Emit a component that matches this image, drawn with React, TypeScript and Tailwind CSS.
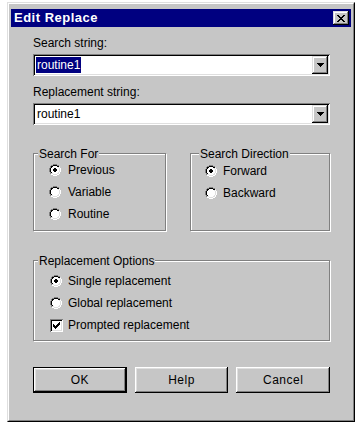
import type { ReactNode } from 'react';

const FACE = 'bg-[#c6c6c6]';

const COLORS: Record<string, string> = {
  D: '#808080',
  K: '#000000',
  W: '#ffffff',
  L: '#dfdfdf',
  w: '#ffffff',
  '#': '#000000',
};

// tiny bitmap glyphs, one rect per pixel
function Pixels({ rows, className }: { rows: string[]; className?: string }) {
  const w = rows[0].length;
  const h = rows.length;
  return (
    <svg width={w} height={h} viewBox={`0 0 ${w} ${h}`} shapeRendering="crispEdges" className={className}>
      {rows.map((row, y) =>
        row.split('').map((c, x) =>
          COLORS[c] ? <rect key={`${x}-${y}`} x={x} y={y} width={1} height={1} fill={COLORS[c]} /> : null
        )
      )}
    </svg>
  );
}

const RADIO = [
  '....DDDD....',
  '..DDKKKKDD..',
  '.DKKwwwwKKL.',
  '.DKwwwwwwLW.',
  'DKwwwwwwwwLW',
  'DKwwwwwwwwLW',
  'DKwwwwwwwwLW',
  'DKwwwwwwwwLW',
  '.DKwwwwwwLW.',
  '.DLLwwwwLLW.',
  '..WWLLLLWW..',
  '....WWWW....',
];

const RADIO_ON = RADIO.map((row, y) => {
  const dot: Record<number, string> = { 4: '.##.', 5: '####', 6: '####', 7: '.##.' };
  if (!dot[y]) return row;
  const d = dot[y];
  return row
    .split('')
    .map((c, x) => (x >= 4 && x <= 7 && d[x - 4] === '#' ? '#' : c))
    .join('');
});

const CHECK = [
  '......#',
  '.....##',
  '#...###',
  '##.###.',
  '#####..',
  '.###...',
  '..#....',
];

const CLOSE_X = [
  '##....##',
  '.##..##.',
  '..####..',
  '...##...',
  '..####..',
  '.##..##.',
  '##....##',
];

const raisedSmall =
  'shadow-[inset_-1px_-1px_0_#000,inset_1px_1px_0_#dfdfdf,inset_-2px_-2px_0_#808080,inset_2px_2px_0_#fff]';
const raisedButton =
  'shadow-[inset_-1px_-1px_0_#000,inset_1px_1px_0_#fff,inset_-2px_-2px_0_#808080,inset_2px_2px_0_#dfdfdf]';
const sunken =
  'shadow-[inset_1px_1px_0_#808080,inset_-1px_-1px_0_#fff,inset_2px_2px_0_#000,inset_-2px_-2px_0_#dfdfdf]';

function Combo({ value, selected }: { value: string; selected?: boolean }) {
  return (
    <div className={`flex h-[22px] w-[297px] bg-white p-[2px] ${sunken}`}>
      <div className="flex flex-1 items-center pl-[1px]">
        <span className={selected ? 'bg-[#000080] px-[1px] leading-[16px] text-white' : 'px-[1px] leading-[16px]'}>
          {value}
        </span>
      </div>
      <div className={`flex h-[18px] w-[16px] items-center justify-center ${FACE} ${raisedSmall}`}>
        <svg width="7" height="4" viewBox="0 0 7 4" shapeRendering="crispEdges">
          <path d="M0 0h7v1H6v1H5v1H4v1H3V3H2V2H1V1H0z" fill="#000" />
        </svg>
      </div>
    </div>
  );
}

function Group({
  label,
  labelLeft,
  className,
  children,
}: {
  label: string;
  labelLeft: string;
  className: string;
  children: ReactNode;
}) {
  return (
    <div className={`relative border border-[#808080] shadow-[inset_1px_1px_0_#fff,1px_1px_0_#fff] ${className}`}>
      <span className={`absolute -top-[7px] ${labelLeft} ${FACE} px-[1px] leading-[14px]`}>{label}</span>
      {children}
    </div>
  );
}

function Radio({ label, checked, gap }: { label: string; checked?: boolean; gap: string }) {
  return (
    <div className={`flex h-[14px] items-center ${gap}`}>
      <Pixels rows={checked ? RADIO_ON : RADIO} />
      <span className="leading-[14px]">{label}</span>
    </div>
  );
}

function Button({ label, isDefault }: { label: string; isDefault?: boolean }) {
  return (
    <div
      className={`flex h-[26px] items-center justify-center ${FACE} ${raisedButton} ${
        isDefault ? 'border border-black' : ''
      } tracking-[0.5px]`}
    >
      {label}
    </div>
  );
}

export default function App() {
  return (
    <div className="h-[428px] w-[361px] bg-white pl-[7px] pt-[2px] font-['Liberation_Sans',Arial,sans-serif] text-[12px] leading-[14px] text-black">
      <div className="h-[420px] w-[348px] border border-b-black border-l-[#dfdfdf] border-r-black border-t-[#dfdfdf]">
        <div className={`h-full border border-b-[#808080] border-l-white border-r-[#808080] border-t-white ${FACE} px-[2px] pt-[5px]`}>
          <div className="flex h-[18px] items-center justify-between bg-[#000080] pl-[3px] pr-[2px]">
            <span className="text-[13px] font-bold tracking-[0.5px] text-white">Edit Replace</span>
            <div className={`flex h-[14px] w-[16px] items-center justify-center ${FACE} ${raisedSmall}`}>
              <Pixels rows={CLOSE_X} />
            </div>
          </div>

          <div className="flex flex-col pl-[22px]">
            <div className="mt-[9px]">Search string:</div>
            <div className="mt-[4px]">
              <Combo value="routine1" selected />
            </div>
            <div className="mt-[9px]">Replacement string:</div>
            <div className="mt-[4px]">
              <Combo value="routine1" />
            </div>

            <div className="mt-[28px] flex w-[297px] justify-between">
              <Group label="Search For" labelLeft="left-[4px]" className="h-[78px] w-[133px] pl-[15px] pt-[9px]">
                <div className="flex flex-col gap-[8px]">
                  <Radio label="Previous" checked gap="gap-[7px]" />
                  <Radio label="Variable" gap="gap-[7px]" />
                  <Radio label="Routine" gap="gap-[7px]" />
                </div>
              </Group>
              <Group label="Search Direction" labelLeft="left-[8px]" className="h-[78px] w-[140px] pl-[14px] pt-[10px]">
                <div className="flex flex-col gap-[8px]">
                  <Radio label="Forward" checked gap="gap-[6px]" />
                  <Radio label="Backward" gap="gap-[6px]" />
                </div>
              </Group>
            </div>

            <Group label="Replacement Options" labelLeft="left-[4px]" className="mt-[29px] h-[81px] w-[297px] pl-[16px] pt-[13px]">
              <div className="flex flex-col gap-[8px]">
                <Radio label="Single replacement" checked gap="gap-[6px]" />
                <Radio label="Global replacement" gap="gap-[6px]" />
                <div className="flex h-[14px] items-center gap-[5px]">
                  <div className={`relative h-[13px] w-[13px] bg-white ${sunken}`}>
                    <Pixels rows={CHECK} className="absolute left-[3px] top-[3px]" />
                  </div>
                  <span>Prompted replacement</span>
                </div>
              </div>
            </Group>

            <div className="mt-[26px] grid w-[297px] grid-cols-3 gap-[8px]">
              <Button label="OK" isDefault />
              <Button label="Help" />
              <Button label="Cancel" />
            </div>
          </div>
        </div>
      </div>
    </div>
  );
}
